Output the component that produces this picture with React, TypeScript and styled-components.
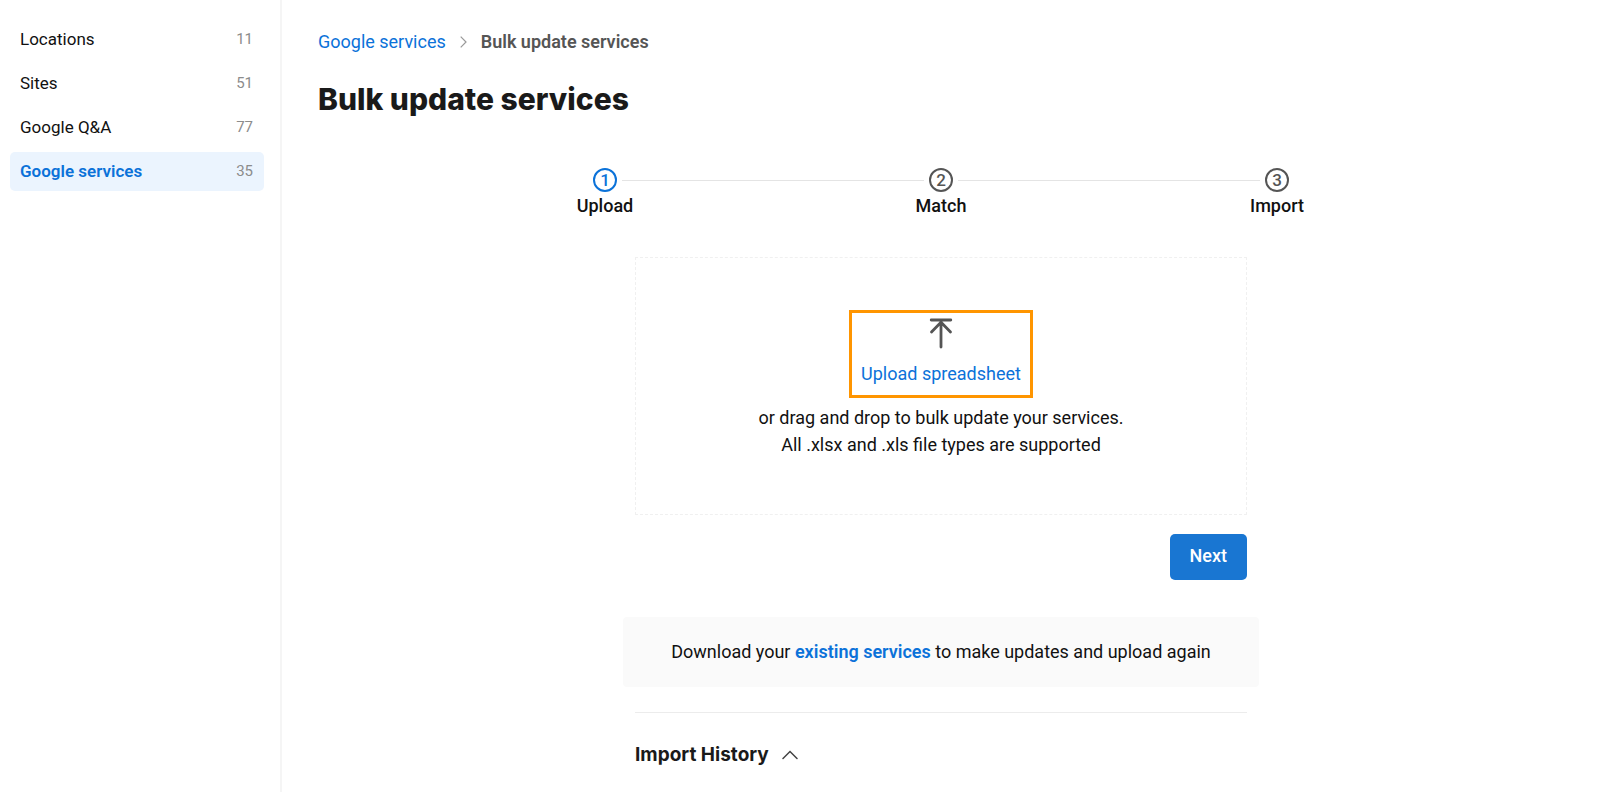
import React, { useState } from "react";
import styled, { createGlobalStyle } from "styled-components";

const blue = "#0b72d9";

const GlobalStyle = createGlobalStyle`
  *, *::before, *::after { box-sizing: border-box; }
  body {
    margin: 0;
    background: #fff;
    color: #111;
    font-family: Roboto, "Liberation Sans", sans-serif;
    font-size: 18px;
    line-height: 24px;
  }
  button { font: inherit; cursor: pointer; }
  a { text-decoration: none; }
`;

const Shell = styled.div`
  display: flex;
  min-height: 100vh;
`;

const Sidebar = styled.nav`
  flex: 0 0 282px;
  padding: 20px 16px 20px 10px;
  border-right: 2px solid #f5f5f5;
`;

const NavList = styled.ul`
  display: flex;
  flex-direction: column;
  gap: 5px;
  margin: 0;
  padding: 0;
  list-style: none;
`;

const NavLink = styled.a<{ $active: boolean }>`
  display: flex;
  align-items: center;
  justify-content: space-between;
  height: 39px;
  padding: 0 11px 2px 10px;
  border-radius: 5px;
  font-size: 17px;
  font-weight: ${(p) => (p.$active ? 600 : 400)};
  color: ${(p) => (p.$active ? blue : "#111")};
  background: ${(p) => (p.$active ? "#ebf4fe" : "transparent")};
`;

const Count = styled.span`
  min-width: 16px;
  font-size: 15px;
  font-weight: 400;
  color: #8c8c8c;
`;

const Main = styled.main`
  flex: 1;
  min-width: 0;
  padding: 30px 36px 20px;
`;

const Breadcrumb = styled.nav`
  display: flex;
  align-items: center;
  gap: 14px;
`;

const TextLink = styled.a<{ $strong?: boolean }>`
  color: ${blue};
  font-weight: ${(p) => (p.$strong ? 600 : 400)};
`;

const Current = styled.span`
  color: #555;
  font-weight: 600;
`;

const Title = styled.h1`
  margin: 23px 0 47px;
  font-family: Inter, sans-serif;
  font-size: 30px;
  font-weight: 800;
  line-height: 44px;
  color: #1a1a1a;
`;

const Steps = styled.ol`
  display: grid;
  grid-template-columns: repeat(3, 1fr);
  max-width: 1008px;
  margin: 0 auto 39px;
  padding: 0;
  list-style: none;
`;

const Step = styled.li`
  display: flex;
  flex-direction: column;
  gap: 2px;
  text-align: center;
  font-weight: 500;
`;

const Track = styled.div`
  display: flex;
  align-items: center;
  gap: 5px;
`;

const Line = styled.span<{ $hidden: boolean }>`
  flex: 1;
  height: 1px;
  background: ${(p) => (p.$hidden ? "transparent" : "#e4e4e4")};
`;

const Marker = styled.span<{ $active: boolean }>`
  width: 24px;
  height: 24px;
  border: 2px solid ${(p) => (p.$active ? blue : "#555")};
  border-radius: 50%;
  font-size: 17px;
  line-height: 20px;
  color: ${(p) => (p.$active ? blue : "#555")};
`;

const Column = styled.div`
  max-width: 612px;
  margin: 0 auto;
`;

const DropZone = styled.section`
  display: flex;
  flex-direction: column;
  align-items: center;
  min-height: 258px;
  padding: 52px 20px;
  border: 1px dashed #f0f0f0;
  text-align: center;
`;

const UploadButton = styled.button`
  display: flex;
  flex-direction: column;
  align-items: center;
  justify-content: space-between;
  height: 88px;
  padding: 4px 9px 9px;
  border: 3px solid #ff9500;
  background: transparent;
  color: ${blue};
`;

const Hint = styled.p`
  margin: 6px 0 0;
  line-height: 27px;
`;

const Actions = styled.div`
  display: flex;
  justify-content: flex-end;
  margin: 19px 0 37px;
`;

const NextButton = styled.button`
  height: 46px;
  padding: 0 20px 2px;
  border: 0;
  border-radius: 5px;
  background: #1976d2;
  color: #fff;
  font-weight: 500;
`;

const Callout = styled.p`
  margin: 0 -12px 25px;
  padding: 23px 12px;
  border-radius: 4px;
  background: #fafafa;
  text-align: center;
`;

const History = styled.section`
  padding-top: 30px;
  border-top: 1px solid #ececec;
`;

const HistoryTitle = styled.h2`
  margin: 0;
  font-family: Inter, sans-serif;
  font-size: 19px;
  font-weight: 700;
  line-height: 24px;
`;

const HistoryToggle = styled.button`
  display: flex;
  align-items: center;
  gap: 13px;
  padding: 0;
  border: 0;
  background: none;
  color: #1a1a1a;
`;

const navItems = [
  { label: "Locations", count: 11 },
  { label: "Sites", count: 51 },
  { label: "Google Q&A", count: 77 },
  { label: "Google services", count: 35 },
];

const steps = ["Upload", "Match", "Import"];

export default function App() {
  const [open, setOpen] = useState(true);
  return (
    <>
      <GlobalStyle />
      <Shell>
        <Sidebar aria-label="Sections">
          <NavList>
            {navItems.map((item, i) => (
              <li key={item.label}>
                <NavLink href="#" $active={i === 3}>
                  {item.label}
                  <Count>{item.count}</Count>
                </NavLink>
              </li>
            ))}
          </NavList>
        </Sidebar>
        <Main>
          <Breadcrumb aria-label="Breadcrumb">
            <TextLink href="#">Google services</TextLink>
            <svg width="7" height="12" viewBox="0 0 7 12" fill="none" stroke="#999" strokeWidth="1.2" aria-hidden="true">
              <path d="M0.7 0.7 6 6 0.7 11.3" />
            </svg>
            <Current>Bulk update services</Current>
          </Breadcrumb>
          <Title>Bulk update services</Title>
          <Steps>
            {steps.map((label, i) => (
              <Step key={label}>
                <Track>
                  <Line $hidden={i === 0} />
                  <Marker $active={i === 0}>{i + 1}</Marker>
                  <Line $hidden={i === steps.length - 1} />
                </Track>
                {label}
              </Step>
            ))}
          </Steps>
          <Column>
            <DropZone>
              <UploadButton type="button">
                <svg width="24" height="32" viewBox="0 0 24 32" fill="none" stroke="#555" strokeWidth="2.8" strokeLinecap="round" strokeLinejoin="round" aria-hidden="true">
                  <path d="M2.2 3h19.6M12 4.5V30M2.5 15 12 5.2 21.5 15" />
                </svg>
                Upload spreadsheet
              </UploadButton>
              <Hint>
                or drag and drop to bulk update your services.
                <br />
                All .xlsx and .xls file types are supported
              </Hint>
            </DropZone>
            <Actions>
              <NextButton type="button">Next</NextButton>
            </Actions>
            <Callout>
              Download your <TextLink href="#" $strong>existing services</TextLink> to make updates and upload again
            </Callout>
            <History>
              <HistoryTitle>
                <HistoryToggle type="button" aria-expanded={open} onClick={() => setOpen(!open)}>
                  Import History
                  <svg width="16" height="10" viewBox="0 0 16 10" fill="none" stroke="#444" strokeWidth="1.5" strokeLinecap="round" aria-hidden="true">
                    <path d={open ? "M1 8.5 8 1.5 15 8.5" : "M1 1.5 8 8.5 15 1.5"} />
                  </svg>
                </HistoryToggle>
              </HistoryTitle>
            </History>
          </Column>
        </Main>
      </Shell>
    </>
  );
}
